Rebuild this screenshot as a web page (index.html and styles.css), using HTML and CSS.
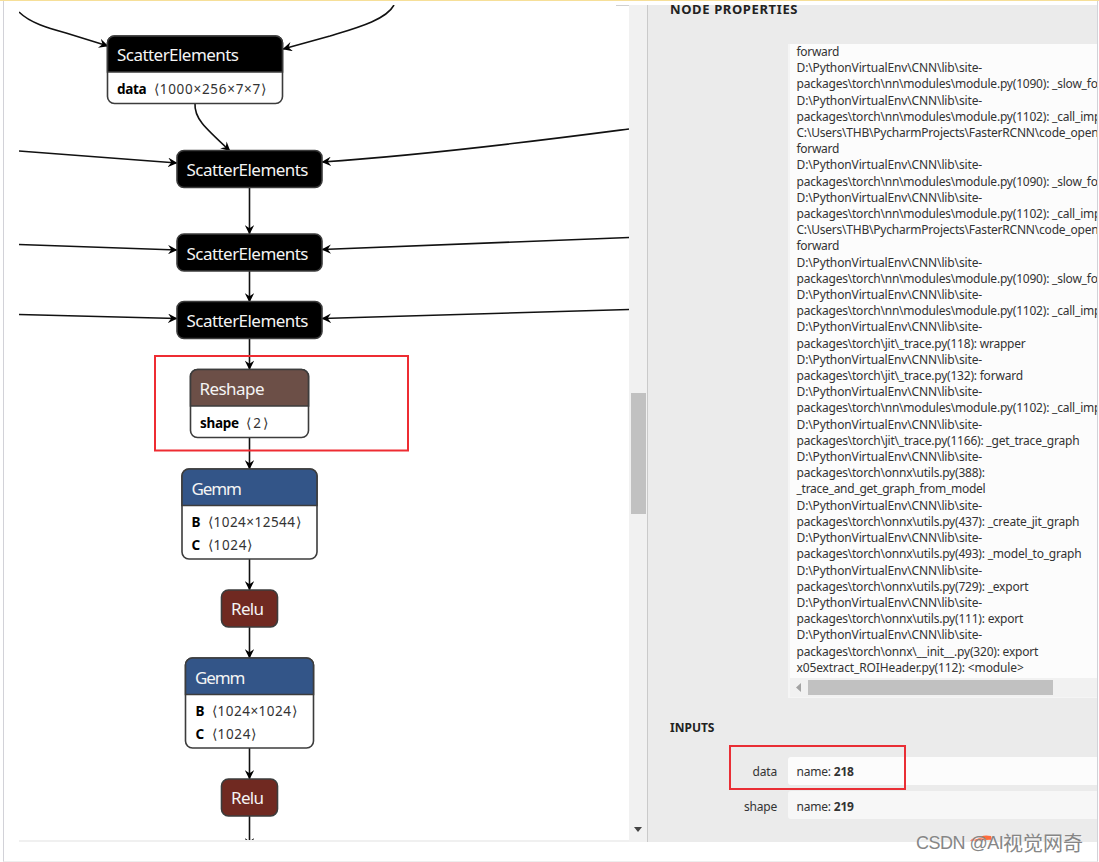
FILE: index.html
```html
<!DOCTYPE html>
<html lang="en">
<head>
<meta charset="utf-8">
<title>Node Properties</title>
<link rel="stylesheet" href="styles.css">
</head>
<body>
<main class="frame">
  <section class="graph">
    <svg class="canvas" width="610" height="835" viewBox="19 5 610 835">
      <defs>
        <marker id="arrow" viewBox="0 0 10 10" refX="9.5" refY="5" markerWidth="9.5" markerHeight="9.5" markerUnits="userSpaceOnUse" orient="auto">
          <path d="M0 0L10 5L0 10L3.5 5Z"/>
        </marker>
      </defs>
      <rect class="corner" x="616" y="5" width="13" height="1"/>
      <g class="edge">
        <path d="M19 12C30 23 48 28 66 33L108 46"/>
        <path d="M394 5C386 20 356 28 330 36L283 49"/>
        <path d="M195 103C194 118 204 127 230 151"/>
        <path d="M19 151L177 163"/>
        <path d="M629 129C560 138 440 154 322 162"/>
        <path d="M249.500 187V234"/>
        <path d="M19 244.500L177 250"/>
        <path d="M629 237.500L322 249.500"/>
        <path d="M249.500 270V302"/>
        <path d="M19 314.500L177 318.500"/>
        <path d="M629 309.500L322 318.500"/>
        <path d="M249.500 338V369.500"/>
        <path d="M249.500 437V469"/>
        <path d="M249.500 559V590"/>
        <path d="M249.500 627V658"/>
        <path d="M249.500 748V779"/>
        <path d="M249.500 816V847"/>
      </g>
      <g class="node">
        <rect class="body" x="107.500" y="36" width="175" height="67.500" rx="7"/>
        <path class="scatter" d="M107.500 72V43a7 7 0 0 1 7-7h161a7 7 0 0 1 7 7V72Z"/>
        <text class="op" x="117" y="61" textLength="122">ScatterElements</text>
        <text class="key" x="117" y="94" textLength="29.500">data</text>
        <text class="dim" x="154" y="94" textLength="112">⟨1000×256×7×7⟩</text>
      </g>
      <g class="node">
        <rect class="scatter" x="177" y="150.500" width="145" height="37" rx="7"/>
        <text class="op" x="186.500" y="176" textLength="122">ScatterElements</text>
        <rect class="scatter" x="177" y="234" width="145" height="37" rx="7"/>
        <text class="op" x="186.500" y="259.500" textLength="122">ScatterElements</text>
        <rect class="scatter" x="177" y="301.500" width="145" height="37" rx="7"/>
        <text class="op" x="186.500" y="327" textLength="122">ScatterElements</text>
      </g>
      <g class="node">
        <rect class="body" x="190.500" y="369.500" width="118" height="68" rx="7"/>
        <path class="reshape" d="M190.500 406V376.500a7 7 0 0 1 7-7h104a7 7 0 0 1 7 7V406Z"/>
        <text class="op" x="199.500" y="395" textLength="65">Reshape</text>
        <text class="key" x="200" y="428" textLength="39">shape</text>
        <text class="dim" x="246" y="428" textLength="22">⟨2⟩</text>
      </g>
      <g class="node">
        <rect class="body" x="182" y="469" width="135" height="90" rx="7"/>
        <path class="gemm" d="M182 505.500V476a7 7 0 0 1 7-7h121a7 7 0 0 1 7 7V505.500Z"/>
        <text class="op" x="191.500" y="494.500" textLength="50.500">Gemm</text>
        <text class="key" x="191.500" y="527" textLength="9.500">B</text>
        <text class="dim" x="208" y="527" textLength="92.500">⟨1024×12544⟩</text>
        <text class="key" x="191.500" y="550" textLength="9">C</text>
        <text class="dim" x="208" y="550" textLength="44">⟨1024⟩</text>
      </g>
      <g class="node">
        <rect class="relu" x="221.500" y="590" width="56" height="37" rx="7"/>
        <text class="op" x="231" y="615" textLength="33">Relu</text>
      </g>
      <g class="node">
        <rect class="body" x="185.500" y="658" width="128" height="90" rx="7"/>
        <path class="gemm" d="M185.500 694.500V665a7 7 0 0 1 7-7h114a7 7 0 0 1 7 7V694.500Z"/>
        <text class="op" x="195" y="683.500" textLength="50.500">Gemm</text>
        <text class="key" x="195.500" y="716" textLength="9.500">B</text>
        <text class="dim" x="212" y="716" textLength="84.500">⟨1024×1024⟩</text>
        <text class="key" x="195.500" y="739" textLength="9">C</text>
        <text class="dim" x="212" y="739" textLength="44">⟨1024⟩</text>
      </g>
      <g class="node">
        <rect class="relu" x="221.500" y="779" width="56" height="37" rx="7"/>
        <text class="op" x="231" y="804" textLength="33">Relu</text>
      </g>
      <rect class="highlight" x="155" y="356" width="253" height="94.500"/>
    </svg>
  </section>
  <div class="vscroll"><div class="vthumb"></div><svg class="down" width="8" height="5" viewBox="0 0 8 5"><path d="M0 0H8L4 5Z"/></svg></div>
  <aside class="sidebar">
    <h2 class="title">NODE PROPERTIES</h2>
    <div class="value">
<pre class="trace"><span class="fwd">forward</span>
<span class="dir">D:\PythonVirtualEnv\CNN\lib\site-</span>
packages\torch\nn\modules\module.py(1090): _slow_fo
<span class="dir">D:\PythonVirtualEnv\CNN\lib\site-</span>
packages\torch\nn\modules\module.py(1102): _call_imp
C:\Users\THB\PycharmProjects\FasterRCNN\code_open
<span class="fwd">forward</span>
<span class="dir">D:\PythonVirtualEnv\CNN\lib\site-</span>
packages\torch\nn\modules\module.py(1090): _slow_fo
<span class="dir">D:\PythonVirtualEnv\CNN\lib\site-</span>
packages\torch\nn\modules\module.py(1102): _call_imp
C:\Users\THB\PycharmProjects\FasterRCNN\code_open
<span class="fwd">forward</span>
<span class="dir">D:\PythonVirtualEnv\CNN\lib\site-</span>
packages\torch\nn\modules\module.py(1090): _slow_fo
<span class="dir">D:\PythonVirtualEnv\CNN\lib\site-</span>
packages\torch\nn\modules\module.py(1102): _call_imp
<span class="dir">D:\PythonVirtualEnv\CNN\lib\site-</span>
packages\torch\jit\_trace.py(118): wrapper
<span class="dir">D:\PythonVirtualEnv\CNN\lib\site-</span>
packages\torch\jit\_trace.py(132): forward
<span class="dir">D:\PythonVirtualEnv\CNN\lib\site-</span>
packages\torch\nn\modules\module.py(1102): _call_imp
<span class="dir">D:\PythonVirtualEnv\CNN\lib\site-</span>
packages\torch\jit\_trace.py(1166): _get_trace_graph
<span class="dir">D:\PythonVirtualEnv\CNN\lib\site-</span>
packages\torch\onnx\utils.py(388):
<span class="fn">_trace_and_get_graph_from_model</span>
<span class="dir">D:\PythonVirtualEnv\CNN\lib\site-</span>
packages\torch\onnx\utils.py(437): _create_jit_graph
<span class="dir">D:\PythonVirtualEnv\CNN\lib\site-</span>
packages\torch\onnx\utils.py(493): _model_to_graph
<span class="dir">D:\PythonVirtualEnv\CNN\lib\site-</span>
packages\torch\onnx\utils.py(729): _export
<span class="dir">D:\PythonVirtualEnv\CNN\lib\site-</span>
packages\torch\onnx\utils.py(111): export
<span class="dir">D:\PythonVirtualEnv\CNN\lib\site-</span>
packages\torch\onnx\__init__.py(320): export
<span class="dir">x05extract_ROIHeader.py(112): &lt;module&gt;</span></pre>
      <div class="hscroll"><svg width="5" height="9" viewBox="0 0 5 9"><path d="M5 0V9L0 4.500Z"/></svg><div class="hthumb"></div></div>
    </div>
    <h2 class="subtitle">INPUTS</h2>
    <div class="row"><span class="name">data</span><div class="field">name: <b>218</b></div></div>
    <div class="row second"><span class="name">shape</span><div class="field dimmed">name: <b>219</b></div></div>
    <div class="marker"></div>
  </aside>
</main>
<div class="watermark">
  <svg class="swoosh" width="24" height="8" viewBox="0 0 24 8"><path d="M0 6Q3 2 7 4Q12 -1 21 1L22 5Q17 4 15 6Q9 3 7 7Q4 5 0 6Z"/></svg>
  <span class="latin">CSDN @AI</span><span class="cjk">视觉网奇</span>
</div>
</body>
</html>
```
FILE: styles.css
```css
* { box-sizing: border-box; }
body {
  margin: 0;
  width: 1099px;
  height: 862px;
  overflow: hidden;
  position: relative;
  background: #fff;
  border-top: 1px solid #f6df98;
  font-family: "Noto Sans", "Open Sans", sans-serif;
}
.frame {
  display: flex;
  width: 1095px;
  height: 861px;
  margin-left: 3px;
  padding: 4px 0 0 15px;
  border: solid #d2d2d8;
  border-width: 0 1px;
  border-bottom: 1px solid #eee;
}
.graph { width: 610px; height: 837px; flex: none; border-bottom: 2px solid #f0f0f0; }
.canvas { display: block; }
.corner { fill: #d0d0d0; }
.edge path { fill: none; stroke: #111; stroke-width: 1.6; marker-end: url(#arrow); }
.node rect, .node path { stroke: #3c3c3c; stroke-width: 1.6; }
.node .body { fill: #fff; }
.scatter { fill: #000; }
.reshape { fill: #6c4f47; }
.gemm { fill: #335588; }
.relu { fill: #702921; }
.op { font-size: 17px; fill: #f4f4f4; }
.key { font-size: 13.5px; font-weight: 700; fill: #000; }
.dim { font-size: 13.5px; fill: #333; }
.highlight { fill: none; stroke: #ee2c32; stroke-width: 2; }
.vscroll {
  flex: none;
  width: 19px;
  height: 837px;
  padding: 388px 1px 0 2px;
  background: #f1f1f1;
  border-right: 1px solid #cacaca;
  display: flex;
  flex-direction: column;
}
.vthumb { width: 15px; height: 121px; background: #c1c1c1; }
.down { margin: 313px 0 0 3px; fill: #444; }
.sidebar {
  flex: 1;
  min-width: 0;
  height: 837px;
  overflow: hidden;
  background: #ebebeb;
  color: #333;
  font-size: 12px;
  letter-spacing: -.2px;
}
.title, .subtitle { margin: 0; padding-left: 22px; color: #222; font-weight: 700; }
.title { height: 39px; font-size: 13px; line-height: 8px; letter-spacing: .62px; white-space: nowrap; }
.value {
  display: flow-root;
  margin-left: 140px;
  height: 654px;
  background: #fcfcfc;
  border: solid #f5f5f5;
  border-width: 0 0 1px 2px;
}
.trace {
  margin: 0;
  height: 634px;
  padding-left: 6.5px;
  font: 12px/16.2px "Noto Sans", "Open Sans", sans-serif;
  letter-spacing: -.21px;
}
.dir { letter-spacing: -.13px; }
.fwd { letter-spacing: -.3px; }
.fn { letter-spacing: -.26px; }
.hscroll { display: flex; align-items: center; height: 19px; padding-left: 6px; gap: 7px; background: #f1f1f1; }
.hscroll svg { fill: #a3a3a3; }
.hthumb { width: 245px; height: 15px; background: #c1c1c1; }
.subtitle { height: 59px; padding-top: 21px; font-size: 12px; line-height: 18px; letter-spacing: 0; }
.row { display: flex; height: 28px; margin-bottom: 6px; line-height: 30px; }
.second { line-height: 31px; }
.name { width: 129px; margin-right: 11px; text-align: right; }
.field { flex: 1; padding-left: 8.5px; background: #fcfcfc; border-radius: 3px 0 0 3px; }
.dimmed { background: #f7f7f7; }
.marker { position: absolute; left: 729px; top: 744px; width: 177px; height: 45px; border: 2px solid #e92e35; }
.watermark {
  position: absolute;
  left: 916px;
  top: 829px;
  display: flex;
  line-height: 26px;
  color: #868686;
  text-shadow: 1px 1px 0 #ffffffa0;
  white-space: nowrap;
}
.latin { position: relative; width: 87px; font: 18px/27px "Liberation Sans", sans-serif; letter-spacing: -.5px; }
.cjk { position: relative; font: 20px/26px "Noto Sans CJK SC", sans-serif; }
.swoosh { position: absolute; left: 54px; top: 5px; fill: #ff6a3c; }
```
